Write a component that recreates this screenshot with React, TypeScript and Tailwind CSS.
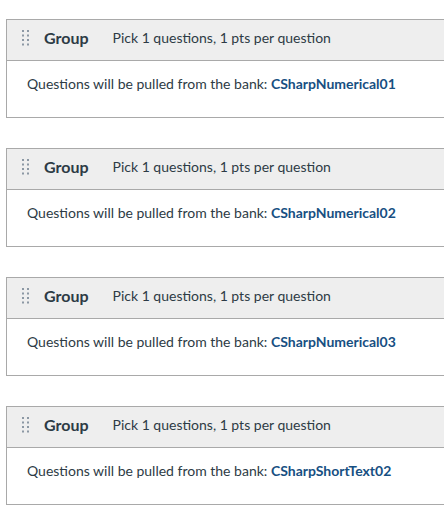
const groups = [
  "CSharpNumerical01",
  "CSharpNumerical02",
  "CSharpNumerical03",
  "CSharpShortText02",
];

function DragHandle() {
  return (
    <svg width="8" height="16" viewBox="0 0 8 16" className="shrink-0" aria-hidden>
      {[0, 1, 2, 3].map((r) =>
        [0, 1].map((c) => (
          <rect key={`${r}-${c}`} x={c * 5} y={r * 4.5} width="2" height="2" fill="#8c98a4" />
        ))
      )}
    </svg>
  );
}

export default function App() {
  return (
    <div className="min-h-screen w-full overflow-hidden bg-white pt-[19px] font-['Lato','Open_Sans',sans-serif] text-[#2d3b45]">
      <div className="flex flex-col gap-[30px]">
        {groups.map((bank) => (
          <div key={bank} className="ml-[6px] w-[480px] border border-[#a9a9a9]">
            <div className="flex h-[41px] items-center border-b border-[#a9a9a9] bg-[#eeeeee] pb-[5px] pl-[15px]">
              <DragHandle />
              <span className="ml-[14px] text-base font-bold">Group</span>
              <span className="ml-[24px] text-sm">Pick 1 questions, 1 pts per question</span>
            </div>
            <div className="h-[56px] pt-[13px] pl-[20px] text-sm leading-5">
              Questions will be pulled from the bank:{" "}
              <span className="font-bold text-[#174f82]">{bank}</span>
            </div>
          </div>
        ))}
      </div>
    </div>
  );
}
